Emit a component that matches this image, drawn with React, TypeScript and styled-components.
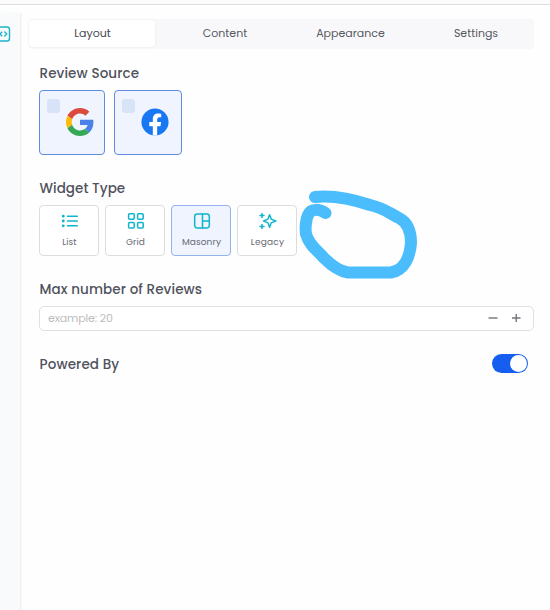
import React from 'react';
import styled, { createGlobalStyle } from 'styled-components';

const Global = createGlobalStyle`
  * { box-sizing: border-box; }
  body { margin: 0; background: #fff; overflow: hidden; }
  button { font: inherit; padding: 0; margin: 0; }
`;

const Page = styled.div`
  position: relative;
  width: 550px;
  height: 610px;
  display: flex;
  flex-direction: column;
  background: #fefefe;
  color: #50525d;
  font-family: Poppins, Inter, 'Noto Sans', sans-serif;
`;

const TopBar = styled.header`
  flex: none;
  height: 5px;
  background: #fcfcfc;
  border-bottom: 1px solid #dcdddf;
`;

const Body = styled.div`
  flex: 1;
  display: flex;
  padding-top: 8px;
`;

const Sidebar = styled.aside`
  width: 21px;
  flex: none;
  background: #f9fafb;
  border-right: 1px solid #f0f1f3;
  box-shadow: 1px 0 2px #f6f7f8;
  padding-top: 13px;
  overflow: hidden;
  svg { display: block; margin-left: -7px; }
`;

const Main = styled.main`
  flex: 1;
  padding: 6px 16px 0 8px;
`;

const Tabs = styled.nav`
  display: grid;
  grid-template-columns: 126px 140px 111px 128px;
  height: 30px;
  padding: 1px 0 2px;
  border-radius: 3px;
  background: #f8f8fa;
`;

const Tab = styled.button<{ $active?: boolean; $shift?: number }>`
  border: 0;
  border-radius: 3px;
  padding-left: ${p => p.$shift ?? 0}px;
  color: ${p => (p.$active ? '#454650' : '#575861')};
  background: ${p => (p.$active ? '#fff' : 'transparent')};
  box-shadow: ${p => (p.$active ? '0 0 2px #dfe0e4' : 'none')};
  font-size: 11px;
  line-height: 27px;
`;

const Form = styled.div`
  padding: 15px 0 0 10px;
`;

const Heading = styled.h2<{ $spacing?: number }>`
  margin: 0 0 0 0.5px;
  height: 20px;
  font-size: 13.5px;
  line-height: 20px;
  font-weight: 500;
  white-space: nowrap;
  letter-spacing: ${p => p.$spacing ?? 0}px;
`;

const Sources = styled.div`
  display: flex;
  gap: 9px;
  margin: 6px 0 24px;
`;

const Source = styled.button<{ $wide?: boolean }>`
  display: flex;
  gap: 6px;
  width: ${p => (p.$wide ? 68 : 66)}px;
  height: 65px;
  padding: 8px 0 0 7px;
  border: 1px solid #608ce0;
  border-radius: 4px;
  background: #eff4ff;
  svg { flex: none; margin-top: 9px; }
`;

const Check = styled.span`
  width: 13px;
  height: 14px;
  flex: none;
  border-radius: 3px;
  background: #d8e3f8;
`;

const Widgets = styled.div`
  display: flex;
  gap: 6px;
  margin: 6px 0 24px;
`;

const Widget = styled.button<{ $active?: boolean }>`
  display: flex;
  flex-direction: column;
  align-items: center;
  width: 60px;
  height: 51px;
  padding: 6px 0 0 1px;
  border: 1px solid ${p => (p.$active ? '#94b2ec' : '#dadde2')};
  border-radius: 4px;
  background: ${p => (p.$active ? '#eff4ff' : '#fff')};
  color: #10b5cb;
  svg { display: block; flex: none; }
`;

const WidgetLabel = styled.span<{ $spacing: number }>`
  margin-top: 6px;
  color: #686971;
  font-size: 9px;
  line-height: 12px;
  letter-spacing: ${p => p.$spacing}px;
`;

const NumberField = styled.div`
  display: flex;
  align-items: center;
  height: 25px;
  margin: 6px 0 24px;
  padding: 0 11px 1px 8px;
  border: 1px solid #dfe0e3;
  border-radius: 5px;
  background: #fff;
`;

const Placeholder = styled.span`
  flex: 1;
  color: #bdbdc0;
  font-size: 11px;
  line-height: 16px;
  letter-spacing: -0.15px;
`;

const Step = styled.button`
  display: flex;
  width: 12px;
  height: 12px;
  margin-left: 11px;
  border: 0;
  background: none;
  color: #73747b;
`;

const Row = styled.div`
  display: flex;
  align-items: center;
  justify-content: space-between;
  height: 20px;
  padding-right: 6.5px;
`;

const Toggle = styled.button`
  display: flex;
  justify-content: flex-end;
  align-items: center;
  width: 36px;
  height: 19px;
  margin-top: -3px;
  padding: 0 1px;
  border: 0;
  border-radius: 10px;
  background: #155eef;
`;

const Knob = styled.span`
  width: 17px;
  height: 17px;
  border-radius: 50%;
  background: #fff;
`;

const Scribble = styled.svg`
  position: absolute;
  left: 290px;
  top: 180px;
  pointer-events: none;
`;

const CodeIcon = () => (
  <svg width="18" height="16" viewBox="0 0 18 16" fill="none" stroke="#20b2cb" strokeWidth="1.4">
    <rect x="1" y="1" width="15.5" height="14" rx="2.5" />
    <path d="M9.2 5.8 7 8 9.2 10.2M11.3 5.5 13.8 8 11.3 10.5" strokeWidth="1.3" />
  </svg>
);

const GoogleLogo = () => (
  <svg width="28" height="28" viewBox="0 0 48 48">
    <path fill="#dc4a3d" d="M24 9.5c3.54 0 6.71 1.22 9.21 3.6l6.85-6.85C35.9 2.38 30.47 0 24 0 14.62 0 6.51 5.38 2.56 13.22l7.98 6.19C12.43 13.72 17.74 9.5 24 9.5z" />
    <path fill="#4a80e8" d="M46.98 24.55c0-1.57-.15-3.09-.38-4.55H24v9.02h12.94c-.58 2.96-2.26 5.48-4.78 7.18l7.73 6c4.51-4.18 7.09-10.36 7.09-17.65z" />
    <path fill="#fbbc05" d="M10.53 28.59c-.48-1.45-.76-2.99-.76-4.59s.27-3.14.76-4.59l-7.98-6.19C.92 16.46 0 20.12 0 24s.92 7.54 2.56 10.78l7.97-6.19z" />
    <path fill="#34a853" d="M24 48c6.48 0 11.93-2.13 15.89-5.81l-7.73-6c-2.15 1.45-4.92 2.3-8.16 2.3-6.26 0-11.57-4.22-13.47-9.91l-7.98 6.19C6.51 42.62 14.62 48 24 48z" />
  </svg>
);

const FacebookLogo = () => (
  <svg width="28" height="28" viewBox="0 0 24 24">
    <circle cx="12" cy="12" r="11.6" fill="#1877f2" />
    <path fill="#fff" d="M10.12 23.6v-8H7.08v-3.5h3.04V9.43c0-3 1.8-4.68 4.54-4.68 1.31 0 2.68.24 2.68.24v2.97h-1.51c-1.49 0-1.95.93-1.95 1.87v2.27h3.33l-.53 3.5h-2.8v8z" />
  </svg>
);

const iconProps = {
  width: 18, height: 18, viewBox: '0 0 18 18', fill: 'none',
  stroke: 'currentColor', strokeWidth: 1.5,
  strokeLinecap: 'round' as const, strokeLinejoin: 'round' as const,
};

const ListIcon = () => (
  <svg {...iconProps}>
    <path d="M6.5 4.2H16.3M6.5 9H16.3M6.5 13.8H16.3" />
    <path d="M2.2 4.2h.1M2.2 9h.1M2.2 13.8h.1" strokeWidth="2.8" />
  </svg>
);

const GridIcon = () => (
  <svg {...iconProps}>
    <rect x="1.6" y="1.8" width="5.6" height="5.4" rx="1" />
    <rect x="10.6" y="1.8" width="5.6" height="5.4" rx="1" />
    <rect x="1.6" y="10.5" width="5.6" height="5.4" rx="1" />
    <rect x="10.6" y="10.5" width="5.6" height="5.4" rx="1" />
  </svg>
);

const MasonryIcon = () => (
  <svg {...iconProps}>
    <rect x="1.7" y="1.9" width="14.6" height="14" rx="2.3" />
    <path d="M9.5 2v14M9.5 9h6.8" />
  </svg>
);

const LegacyIcon = () => (
  <svg {...iconProps}>
    <path d="M10.6 2.7 12.2 7.1 16.8 9 12.2 10.9 10.6 15.3 9 10.9 4.6 9 9 7.1z" />
    <path d="M3 1.5v4M1 3.5h4M3 12.5v4M1 14.5h4" />
  </svg>
);

const widgets = [
  { label: 'List', icon: <ListIcon />, spacing: 0.1 },
  { label: 'Grid', icon: <GridIcon />, spacing: 0.1 },
  { label: 'Masonry', icon: <MasonryIcon />, spacing: 0.1, active: true },
  { label: 'Legacy', icon: <LegacyIcon />, spacing: 0.2 },
];

export default function App() {
  return (
    <Page>
      <Global />
      <TopBar />
      <Body>
        <Sidebar><CodeIcon /></Sidebar>
        <Main>
          <Tabs>
            <Tab $active $shift={1}>Layout</Tab>
            <Tab>Content</Tab>
            <Tab>Appearance</Tab>
            <Tab $shift={12}>Settings</Tab>
          </Tabs>
          <Form>
            <Heading $spacing={0.1}>Review Source</Heading>
            <Sources>
              <Source aria-label="Google"><Check /><GoogleLogo /></Source>
              <Source aria-label="Facebook" $wide><Check /><FacebookLogo /></Source>
            </Sources>
            <Heading $spacing={0.05}>Widget Type</Heading>
            <Widgets>
              {widgets.map(w => (
                <Widget key={w.label} $active={w.active}>
                  {w.icon}
                  <WidgetLabel $spacing={w.spacing}>{w.label}</WidgetLabel>
                </Widget>
              ))}
            </Widgets>
            <Heading $spacing={0.1}>Max number of Reviews</Heading>
            <NumberField>
              <Placeholder>example: 20</Placeholder>
              <Step aria-label="Decrease">
                <svg width="12" height="12" viewBox="0 0 12 12" stroke="currentColor" strokeWidth="1.4"><path d="M1.5 6h9" /></svg>
              </Step>
              <Step aria-label="Increase">
                <svg width="12" height="12" viewBox="0 0 12 12" stroke="currentColor" strokeWidth="1.4"><path d="M2 6h8.5M6.2 2v8" /></svg>
              </Step>
            </NumberField>
            <Row>
              <Heading $spacing={0.12}>Powered By</Heading>
              <Toggle role="switch" aria-checked="true" aria-label="Powered By"><Knob /></Toggle>
            </Row>
          </Form>
        </Main>
      </Body>
      <Scribble width="140" height="110" viewBox="0 0 140 110" fill="none" stroke="#4bbdfd" strokeWidth="12" strokeLinecap="round" strokeLinejoin="round">
        <path d="M25 17C43 15 59 18 80 25C94 28 99 33 109 38C119 43 121 53 121 63C120 76 115 90 101 92.5H58C48 91 41 85 34 78C27 70 19 65 16 54C15 48 16 39 18 35C21 28 29 29 35.5 33" />
      </Scribble>
    </Page>
  );
}
